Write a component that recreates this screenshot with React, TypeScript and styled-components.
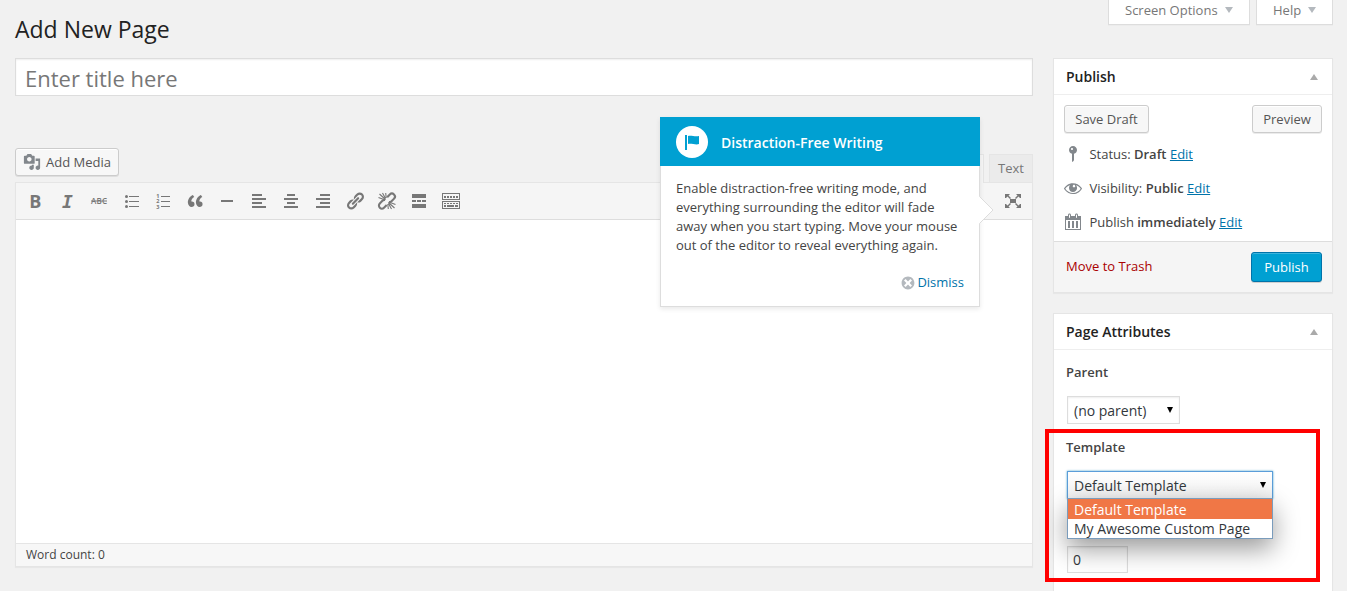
import React from 'react';
import styled, { createGlobalStyle, css } from 'styled-components';

const GlobalStyle = createGlobalStyle`
  * { box-sizing: border-box; }
  html, body { margin: 0; background: #f1f1f1; }
  body {
    font: 13px/19px "Open Sans", sans-serif;
    color: #444;
    overflow: hidden;
  }
`;

const Page = styled.div`
  position: relative;
  width: 1347px;
  height: 591px;
  padding: 0 14px 0 15px;
  overflow: hidden;
  background: #f1f1f1;
`;

const Header = styled.header`
  display: flex;
  justify-content: space-between;
  align-items: flex-start;
  height: 58px;
`;

const PageTitle = styled.h1`
  margin: 0;
  padding-top: 15px;
  font-size: 23px;
  font-weight: 400;
  line-height: 29px;
  color: #222;
`;

const MetaLinks = styled.nav`
  display: flex;
  gap: 6px;
`;

const MetaTab = styled.button<{ $width: number }>`
  display: flex;
  justify-content: space-between;
  width: ${(p) => p.$width}px;
  height: 25px;
  padding: 1px 16px 0 16px;
  border: 1px solid #ddd;
  border-top: 0;
  background: #fff;
  font: 13px/19px "Open Sans", sans-serif;
  color: #777;
  box-shadow: 0 1px 1px rgba(0, 0, 0, 0.02);
`;

const Triangle = styled.i<{ $up?: boolean }>`
  width: 0;
  height: 0;
  border: 4px solid transparent;
  ${(p) =>
    p.$up
      ? css`border-top: 0; border-bottom: 6px solid #aaa;`
      : css`margin-top: 6px; border-bottom: 0; border-top: 6px solid #b4b9be;`}
`;

const Columns = styled.div`
  display: grid;
  grid-template-columns: 1018px 280px;
  gap: 20px;
`;

const Main = styled.main`
  display: flex;
  flex-direction: column;
`;

const TitleField = styled.div`
  height: 38px;
  padding: 0 9px;
  border: 1px solid #ddd;
  background: #fff;
  box-shadow: inset 0 1px 2px rgba(0, 0, 0, 0.07);
  font-size: 22px;
  line-height: 39px;
  color: #777;
`;

const EditorTools = styled.div`
  display: flex;
  justify-content: space-between;
  align-items: flex-end;
  height: 86px;
`;

const Button = styled.button<{ $width: number }>`
  display: flex;
  align-items: center;
  justify-content: center;
  width: ${(p) => p.$width}px;
  height: 28px;
  padding: 0;
  border: 1px solid #ccc;
  border-radius: 3px;
  background: #f7f7f7;
  box-shadow: inset 0 1px 0 #fff, 0 1px 0 rgba(0, 0, 0, 0.08);
  font: 13px/26px "Open Sans", sans-serif;
  color: #555;
`;

const MediaButton = styled(Button)`
  gap: 5px;
  margin-bottom: 6px;

  svg { color: #82878c; }
`;

const PrimaryButton = styled(Button)`
  height: 30px;
  border-color: #0073aa;
  background: #00a0d2;
  box-shadow: inset 0 1px 0 rgba(120, 200, 230, 0.5), 0 1px 0 rgba(0, 0, 0, 0.15);
  color: #fff;
`;

const Tabs = styled.div`
  display: flex;
  gap: 5px;
`;

const Tab = styled.div<{ $active?: boolean }>`
  position: relative;
  height: ${(p) => (p.$active ? 29 : 28)}px;
  width: ${(p) => (p.$active ? 56 : 44)}px;
  margin-bottom: ${(p) => (p.$active ? -1 : 0)}px;
  border: 1px solid #e5e5e5;
  border-bottom: 0;
  background: ${(p) => (p.$active ? '#f5f5f5' : '#ebebeb')};
  color: #777;
  line-height: 27px;
  text-align: center;
`;

const Editor = styled.section`
  display: flex;
  flex-direction: column;
  height: 385px;
  border: 1px solid #e5e5e5;
  background: #fff;
  box-shadow: 0 1px 1px rgba(0, 0, 0, 0.04);
`;

const Toolbar = styled.div`
  display: flex;
  align-items: center;
  gap: 12px;
  height: 37px;
  padding: 0 9px;
  border-bottom: 1px solid #ddd;
  background: #f5f5f5;
  color: #777;

  svg:last-child { margin-left: auto; }
`;

const Canvas = styled.div`
  flex: 1;
`;

const StatusBar = styled.div`
  height: 23px;
  padding: 0 10px;
  border-top: 1px solid #e5e5e5;
  background: #f7f7f7;
  font-size: 12px;
  line-height: 22px;
`;

const Sidebar = styled.aside`
  display: flex;
  flex-direction: column;
  gap: 20px;
`;

const Postbox = styled.section<{ $height: number }>`
  display: flex;
  flex-direction: column;
  height: ${(p) => p.$height}px;
  border: 1px solid #e5e5e5;
  background: #fff;
  box-shadow: 0 1px 1px rgba(0, 0, 0, 0.04);
`;

const PostboxHead = styled.div`
  display: flex;
  align-items: center;
  justify-content: space-between;
  height: 36px;
  padding: 0 14px 0 12px;
  border-bottom: 1px solid #eee;
`;

const PostboxTitle = styled.h2`
  margin: 0;
  font-size: 14px;
  font-weight: 600;
  line-height: 20px;
  color: #222;
`;

const ButtonRow = styled.div`
  display: flex;
  justify-content: space-between;
  padding: 10px 10px 0;
`;

const StatusList = styled.div`
  display: flex;
  flex-direction: column;
  flex: 1;
  padding: 4px 9px 0;
`;

const StatusRow = styled.div`
  display: flex;
  align-items: center;
  gap: 6.4px;
  height: 34px;

  svg { color: #82878c; }
  b { font-weight: 600; }
`;

const EditLink = styled.a`
  color: #0073aa;
  text-decoration: underline;
`;

const PublishActions = styled.div`
  display: flex;
  justify-content: space-between;
  height: 51px;
  padding: 10px 10px 0 12px;
  border-top: 1px solid #ddd;
  background: #f5f5f5;
`;

const TrashLink = styled.a`
  padding-top: 5px;
  color: #a00;
`;

const Attributes = styled.div`
  display: flex;
  flex-direction: column;
  align-items: flex-start;
  padding: 13px 12px 0;
`;

const FieldLabel = styled.label`
  height: 19px;
  font-weight: 600;
  line-height: 19px;
`;

const SelectBox = styled.div<{ $width: number; $open?: boolean }>`
  position: relative;
  display: flex;
  justify-content: space-between;
  width: ${(p) => p.$width}px;
  height: 28px;
  margin: 14px 0 14px 1px;
  padding: 0 6px;
  border: 1px solid #ddd;
  background: #fff;
  box-shadow: inset 0 1px 2px rgba(0, 0, 0, 0.07);
  font-size: 14px;
  line-height: 28px;
  color: #32373c;
  ${(p) =>
    p.$open &&
    css`
      border-color: #5b9dd9;
      background: linear-gradient(#fff, #f1f1f1);
      box-shadow: 0 0 2px rgba(30, 140, 190, 0.8);
    `}
`;

const SelectArrow = styled.i`
  width: 0;
  height: 0;
  margin-top: 10px;
  border: 3.5px solid transparent;
  border-top: 6px solid #000;
  border-bottom: 0;
`;

const Options = styled.div`
  position: absolute;
  z-index: 2;
  top: 26px;
  left: -1px;
  width: 206px;
  height: 41px;
  border: 1px solid #7a9cbc;
  background: #fff;
  box-shadow: 0 10px 26px rgba(0, 0, 0, 0.4);
`;

const Option = styled.div<{ $selected?: boolean }>`
  height: ${(p) => (p.$selected ? 20 : 19)}px;
  padding: 0 6px;
  line-height: ${(p) => (p.$selected ? 21 : 19)}px;
  background: ${(p) => (p.$selected ? '#f07746' : '#fff')};
  color: ${(p) => (p.$selected ? '#fff' : '#32373c')};
`;

const OrderField = styled.div`
  width: 61px;
  height: 27px;
  margin: 33px 0 0 1px;
  padding: 0 5px;
  border: 1px solid #ddd;
  box-shadow: inset 0 1px 2px rgba(0, 0, 0, 0.07);
  font-size: 14px;
  line-height: 25px;
  color: #32373c;
`;

const Highlight = styled.div`
  position: absolute;
  z-index: 3;
  top: 429px;
  left: 1045px;
  width: 275px;
  height: 153px;
  border: 4px solid #f00;
`;

const Pointer = styled.div`
  position: absolute;
  z-index: 4;
  top: 117px;
  left: 660px;
  display: flex;
  flex-direction: column;
  width: 320px;
  height: 190px;
  border: 1px solid #ddd;
  border-top: 0;
  background: #fff;
  box-shadow: 0 2px 5px rgba(0, 0, 0, 0.09);
`;

const PointerHead = styled.h3`
  display: flex;
  align-items: center;
  gap: 13px;
  height: 49px;
  margin: 0 -1px;
  padding: 1px 16px 0;
  background: #00a0d2;
  color: #fff;
  font-size: 14px;
  font-weight: 600;
`;

const FlagBadge = styled.span`
  display: flex;
  align-items: center;
  justify-content: center;
  width: 32px;
  height: 32px;
  border-radius: 50%;
  background: #fff;
  color: #00a0d2;
`;

const PointerText = styled.p`
  margin: 0;
  padding: 13px 15px 0;
  line-height: 19px;
  white-space: pre-line;
`;

const DismissLink = styled.a`
  display: flex;
  align-items: center;
  justify-content: flex-end;
  gap: 1.5px;
  margin-top: 18px;
  padding-right: 15px;
  color: #0073aa;

  svg { color: #b4b9be; }
`;

const PointerArrow = styled.svg`
  position: absolute;
  top: 79px;
  left: 318px;
`;

const Icon = ({ d, size = 20, children }: { d?: string; size?: number; children?: React.ReactNode }) => (
  <svg width={size} height={size} viewBox="0 0 20 20" fill="currentColor" overflow="visible">
    {d && <path d={d} fillRule="evenodd" />}
    {children}
  </svg>
);

const paths = {
  media:
    'M13 11V4c0-.55-.45-1-1-1h-1.67L9 1H5L3.67 3H2c-.55 0-1 .45-1 1v7c0 .55.45 1 1 1h10c.55 0 1-.45 1-1zM7 4.5c1.38 0 2.5 1.12 2.5 2.5S8.38 9.5 7 9.5 4.5 8.38 4.5 7 5.62 4.5 7 4.5zM14 6h5v10.5c0 1.38-1.12 2.5-2.5 2.5S14 17.88 14 16.5s1.12-2.5 2.5-2.5c.17 0 .34.02.5.05V9h-3V6zm-4 8.05V13h2v3.5c0 1.38-1.12 2.5-2.5 2.5S7 17.88 7 16.5 8.12 14 9.5 14c.17 0 .34.02.5.05z',
  quote:
    'M9.49 13.22c0-.74-.2-1.38-.61-1.9-.62-.78-1.83-.88-2.53-.72-.29-1.65 1.11-3.75 2.92-4.65L7.88 4c-2.73 1.3-5.42 4.28-4.96 8.05C3.21 14.43 4.59 16 6.54 16c.85 0 1.56-.25 2.12-.75s.83-1.18.83-2.03zm8.05 0c0-.74-.2-1.38-.61-1.9-.63-.78-1.83-.88-2.53-.72-.29-1.65 1.11-3.75 2.92-4.65L15.93 4c-2.73 1.3-5.41 4.28-4.95 8.05.29 2.38 1.66 3.95 3.61 3.95.85 0 1.56-.25 2.12-.75s.83-1.18.83-2.03z',
  bullets: 'M8 5h10v1H8zM8 10h10v1H8zM8 15h10v1H8z',
  numbers: 'M8 5h9v1H8zM8 10h9v1H8zM8 15h9v1H8z',
  rule: 'M4 9h12v2H4z',
  left: 'M3 3h10v2H3zM3 7h14v2H3zM3 11h10v2H3zM3 15h14v2H3z',
  center: 'M6 3h8v2H6zM3 7h14v2H3zM6 11h8v2H6zM3 15h14v2H3z',
  right: 'M7 3h10v2H7zM3 7h14v2H3zM7 11h10v2H7zM3 15h14v2H3z',
  link:
    'M17.74 2.76c1.68 1.69 1.68 4.41 0 6.1l-1.53 1.52c-1.12 1.12-2.7 1.47-4.14 1.09l2.62-2.61.76-.77.76-.76c.84-.84.84-2.2 0-3.04-.84-.85-2.2-.85-3.04 0l-.77.76-3.38 3.38c-.37-1.44-.02-3.02 1.1-4.14l1.52-1.53c1.69-1.68 4.42-1.68 6.1 0zM8.59 13.43l5.34-5.34c.42-.42.42-1.1 0-1.52-.44-.43-1.13-.39-1.53 0l-5.33 5.34c-.42.42-.42 1.1 0 1.52.44.43 1.13.39 1.52 0zm-.76 2.29l4.14-4.15c.38 1.44.03 3.02-1.09 4.14l-1.52 1.53c-1.69 1.68-4.41 1.68-6.1 0-1.68-1.68-1.68-4.42 0-6.1l1.53-1.52c1.12-1.12 2.7-1.47 4.14-1.1l-4.14 4.15c-.85.84-.85 2.2 0 3.05.84.84 2.2.84 3.04 0z',
  more: 'M3 3h14v4H3zM3 9h4v2H3zM8 9h4v2H8zM13 9h4v2h-4zM3 13h14v4H3z',
  keyboard:
    'M1 2h18v7H1zM2 3v5h16V3zM1 10h18v8H1zM2 11v6h16v-6zM3 5h2v2H3zM6 5h2v2H6zM9 5h2v2H9zM12 5h2v2h-2zM15 5h2v2h-2zM3 12h2v1H3zM6 12h2v1H6zM9 12h2v1H9zM12 12h2v1h-2zM15 12h2v1h-2zM3 14h2v2H3zM6 14h7v2H6zM14 14h3v2h-3z',
  expand:
    'M7 8h6v4H7zM2 3h5L5.5 4.500 8 7l-1 1L4.500 5.500 3 7H2zM18 3h-5l1.500 1.500L12 7l1 1 2.500-2.500L17 7h1zM2 17h5l-1.500-1.500L8 13l-1-1-2.500 2.500L3 13H2zM18 17h-5l1.500-1.500L12 13l1-1 2.500 2.500L17 13h1z',
  flag: 'M5 18V3H3v15h2zm1-6V4c3-1 7 1 11 0v8c-3 1.27-8-1-11 0z',
  dismiss:
    'M10 2c4.42 0 8 3.58 8 8s-3.58 8-8 8-8-3.58-8-8 3.58-8 8-8zm5 11l-3-3 3-3-2-2-3 3-3-3-2 2 3 3-3 3 2 2 3-3 3 3z',
  pin: 'M14 6c0 1.86-1.28 3.41-3 3.86V16c0 1-2 2-2 2V9.86c-1.72-.45-3-2-3-3.86 0-2.21 1.79-4 4-4s4 1.79 4 4zM8 5c0 .55.45 1 1 1s1-.45 1-1-.45-1-1-1-1 .45-1 1z',
  eye: 'M18.3 9.5C15 4.9 8.5 3.8 3.9 7.2c-1.2.9-2.2 2.1-3 3.4.2.4.5.8.8 1.2 3.3 4.6 9.6 5.6 14.2 2.4.9-.7 1.7-1.4 2.4-2.4.3-.4.5-.8.8-1.2-.3-.4-.5-.8-.8-1.1zM10.1 7.2c.5-.5 1.3-.5 1.8 0s.5 1.3 0 1.8-1.3.5-1.8 0-.5-1.3 0-1.8zM10 14.9c-3.1 0-6-1.6-7.7-4.2C3.5 9 5.1 7.8 7 7.2c-.7.8-1 1.7-1 2.7 0 2.2 1.7 4.1 4 4.1 2.2 0 4.1-1.7 4.1-4 0-1-.4-2-1.1-2.8 1.9.6 3.5 1.8 4.7 3.5-1.7 2.6-4.6 4.2-7.7 4.2z',
  calendar:
    'M15 4h3v14H2V4h3V3c0-.83.67-1.5 1.5-1.5S8 2.17 8 3v1h4V3c0-.83.67-1.5 1.5-1.5S15 2.17 15 3v1zM6 3v2.5c0 .28.22.5.5.5s.5-.22.5-.5V3c0-.28-.22-.5-.5-.5S6 2.72 6 3zm7 0v2.5c0 .28.22.5.5.5s.5-.22.5-.5V3c0-.28-.22-.5-.5-.5s-.5.22-.5.5zm4 14V8H3v9h14zM7 16V9H5v7h2zm4 0V9H9v7h2zm4 0V9h-2v7h2z',
};

const ToolbarIcons = () => (
  <>
    <Icon>
      <text x="4.200" y="17" fontFamily="Open Sans" fontWeight="700" fontSize="18">B</text>
    </Icon>
    <Icon>
      <text x="5" y="17" fontFamily="DejaVu Sans Mono" fontWeight="700" fontStyle="italic" fontSize="18">I</text>
    </Icon>
    <Icon>
      <text x="2" y="13" fontFamily="Open Sans" fontWeight="600" fontSize="8" textLength="16">ABC</text>
      <path d="M2 9.5h16v1H2z" />
    </Icon>
    <Icon d={paths.bullets}>
      <circle cx="5.500" cy="5.500" r="1.5" />
      <circle cx="5.500" cy="10.500" r="1.5" />
      <circle cx="5.500" cy="15.500" r="1.5" />
    </Icon>
    <Icon d={paths.numbers}>
      <text x="3.200" y="7" fontFamily="Open Sans" fontWeight="700" fontSize="5.500">1</text>
      <text x="3.200" y="12.300" fontFamily="Open Sans" fontWeight="700" fontSize="5.500">2</text>
      <text x="3.200" y="17.600" fontFamily="Open Sans" fontWeight="700" fontSize="5.500">3</text>
    </Icon>
    <Icon d={paths.quote} />
    <Icon d={paths.rule} />
    <Icon d={paths.left} />
    <Icon d={paths.center} />
    <Icon d={paths.right} />
    <Icon d={paths.link} />
    <Icon>
      <g fill="none" stroke="currentColor" strokeWidth="2.100">
        <path d="M10.2 6.3l2.6-2.8a2.9 2.9 0 0 1 4.3 4.1l-2.6 2.7c-.8.7-1.8.9-2.7.6M8.2 9.1c-1.1-.3-2 0-2.8.7L2.8 12.500a2.900 2.900 0 0 0 4.200 4.200l2.700-2.700" />
        <path strokeWidth="1.100" d="M8.500 8.500L2.500 3M8.500 7.500L5.500 2M7.500 8.800L1.500 6.500M9.200 7L8.700 2M11.500 11.500L17.500 17M11.500 12.500L14.500 18M12.500 11.200L18.500 13.500M10.800 13L11.300 18" />
      </g>
    </Icon>
    <Icon d={paths.more} />
    <Icon d={paths.keyboard} />
    <Icon d={paths.expand} />
  </>
);

const PublishBox = () => (
  <Postbox $height={235}>
    <PostboxHead>
      <PostboxTitle>Publish</PostboxTitle>
      <Triangle $up />
    </PostboxHead>
    <ButtonRow>
      <Button $width={85}>Save Draft</Button>
      <Button $width={70}>Preview</Button>
    </ButtonRow>
    <StatusList>
      <StatusRow>
        <Icon d={paths.pin} />
        <span>Status: <b>Draft</b> <EditLink>Edit</EditLink></span>
      </StatusRow>
      <StatusRow>
        <Icon d={paths.eye} />
        <span>Visibility: <b>Public</b> <EditLink>Edit</EditLink></span>
      </StatusRow>
      <StatusRow>
        <Icon d={paths.calendar} />
        <span>Publish <b>immediately</b> <EditLink>Edit</EditLink></span>
      </StatusRow>
    </StatusList>
    <PublishActions>
      <TrashLink>Move to Trash</TrashLink>
      <PrimaryButton $width={71}>Publish</PrimaryButton>
    </PublishActions>
  </Postbox>
);

const AttributesBox = () => (
  <Postbox $height={320}>
    <PostboxHead>
      <PostboxTitle>Page Attributes</PostboxTitle>
      <Triangle $up />
    </PostboxHead>
    <Attributes>
      <FieldLabel>Parent</FieldLabel>
      <SelectBox $width={113}>
        (no parent)
        <SelectArrow />
      </SelectBox>
      <FieldLabel>Template</FieldLabel>
      <SelectBox $width={206} $open>
        Default Template
        <SelectArrow />
        <Options>
          <Option $selected>Default Template</Option>
          <Option>My Awesome Custom Page</Option>
        </Options>
      </SelectBox>
      <OrderField>0</OrderField>
    </Attributes>
  </Postbox>
);

const FeaturePointer = () => (
  <Pointer>
    <PointerHead>
      <FlagBadge><Icon d={paths.flag} /></FlagBadge>
      Distraction-Free Writing
    </PointerHead>
    <PointerText>
      {'Enable distraction-free writing mode, and\neverything surrounding the editor will fade\naway when you start typing. Move your mouse\nout of the editor to reveal everything again.'}
    </PointerText>
    <DismissLink>
      <Icon d={paths.dismiss} size={16} />
      Dismiss
    </DismissLink>
    <PointerArrow width="15" height="28" viewBox="0 0 15 28">
      <path d="M0 0.500L.5 .5L14 14L.5 27.500H0z" fill="#fff" />
      <path d="M.5 .5L14 14L.5 27.500" fill="none" stroke="#ddd" />
    </PointerArrow>
  </Pointer>
);

export default function App() {
  return (
    <>
      <GlobalStyle />
      <Page>
        <Header>
          <PageTitle>Add New Page</PageTitle>
          <MetaLinks>
            <MetaTab $width={142}>Screen Options <Triangle /></MetaTab>
            <MetaTab $width={77}>Help <Triangle /></MetaTab>
          </MetaLinks>
        </Header>
        <Columns>
          <Main>
            <TitleField>Enter title here</TitleField>
            <EditorTools>
              <MediaButton $width={104}>
                <Icon d={paths.media} size={18} />
                Add Media
              </MediaButton>
              <Tabs>
                <Tab $active />
                <Tab>Text</Tab>
              </Tabs>
            </EditorTools>
            <Editor>
              <Toolbar><ToolbarIcons /></Toolbar>
              <Canvas />
              <StatusBar>Word count: 0</StatusBar>
            </Editor>
          </Main>
          <Sidebar>
            <PublishBox />
            <AttributesBox />
          </Sidebar>
        </Columns>
        <FeaturePointer />
        <Highlight />
      </Page>
    </>
  );
}
